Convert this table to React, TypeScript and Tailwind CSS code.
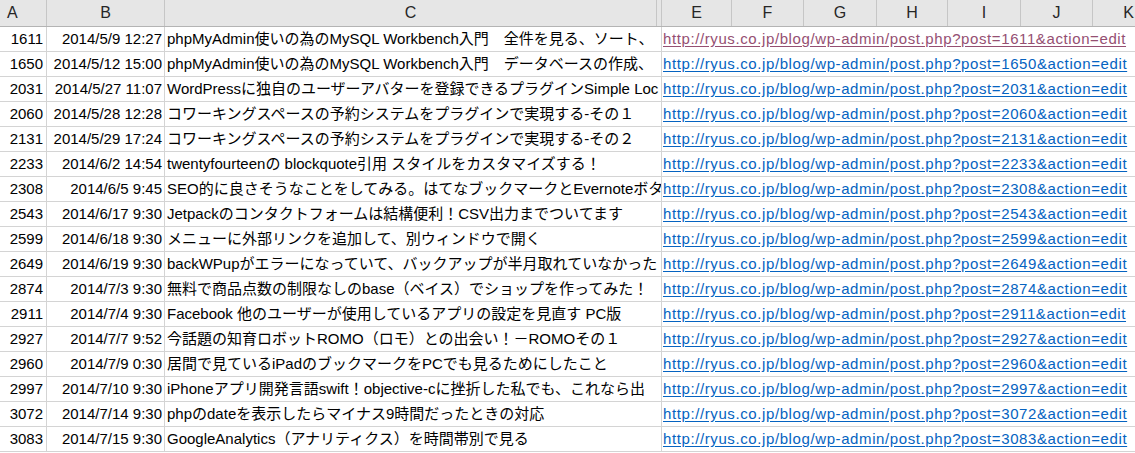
// Excel風の一覧: 投稿ID・日時・タイトル・編集リンク

type Row = { id: number; date: string; title: string };

const rows: Row[] = [
  { id: 1611, date: "2014/5/9 12:27", title: "phpMyAdmin使いの為のMySQL Workbench入門　全件を見る、ソート、" },
  { id: 1650, date: "2014/5/12 15:00", title: "phpMyAdmin使いの為のMySQL Workbench入門　データベースの作成、" },
  { id: 2031, date: "2014/5/27 11:07", title: "WordPressに独自のユーザーアバターを登録できるプラグインSimple Loc" },
  { id: 2060, date: "2014/5/28 12:28", title: "コワーキングスペースの予約システムをプラグインで実現する-その１" },
  { id: 2131, date: "2014/5/29 17:24", title: "コワーキングスペースの予約システムをプラグインで実現する-その２" },
  { id: 2233, date: "2014/6/2 14:54", title: "twentyfourteenの blockquote引用 スタイルをカスタマイズする！" },
  { id: 2308, date: "2014/6/5 9:45", title: "SEO的に良さそうなことをしてみる。はてなブックマークとEvernoteボタ" },
  { id: 2543, date: "2014/6/17 9:30", title: "Jetpackのコンタクトフォームは結構便利！CSV出力までついてます" },
  { id: 2599, date: "2014/6/18 9:30", title: "メニューに外部リンクを追加して、別ウィンドウで開く" },
  { id: 2649, date: "2014/6/19 9:30", title: "backWPupがエラーになっていて、バックアップが半月取れていなかった" },
  { id: 2874, date: "2014/7/3 9:30", title: "無料で商品点数の制限なしのbase（ベイス）でショップを作ってみた！" },
  { id: 2911, date: "2014/7/4 9:30", title: "Facebook 他のユーザーが使用しているアプリの設定を見直す PC版" },
  { id: 2927, date: "2014/7/7 9:52", title: "今話題の知育ロボットROMO（ロモ）との出会い！－ROMOその１" },
  { id: 2960, date: "2014/7/9 0:30", title: "居間で見ているiPadのブックマークをPCでも見るためにしたこと" },
  { id: 2997, date: "2014/7/10 9:30", title: "iPhoneアプリ開発言語swift！objective-cに挫折した私でも、これなら出" },
  { id: 3072, date: "2014/7/14 9:30", title: "phpのdateを表示したらマイナス9時間だったときの対応" },
  { id: 3083, date: "2014/7/15 9:30", title: "GoogleAnalytics（アナリティクス）を時間帯別で見る" },
];

// 列ヘッダー（D列は非表示なので細い隙間だけ）
const headers = [
  { label: "A", cls: "w-[47px] justify-start pl-[7px]" },
  { label: "B", cls: "w-[118px] justify-center" },
  { label: "C", cls: "w-[492px] justify-center" },
  { label: "", cls: "w-[5px]" },
  { label: "E", cls: "w-[70px] justify-center" },
  { label: "F", cls: "w-[72px] justify-center" },
  { label: "G", cls: "w-[73px] justify-center" },
  { label: "H", cls: "w-[71px] justify-center" },
  { label: "I", cls: "w-[73px] justify-center" },
  { label: "J", cls: "w-[72px] justify-center" },
  { label: "K", cls: "w-[72px] justify-center" },
];

export default function App() {
  return (
    <div className="h-[453px] w-[1135px] overflow-hidden bg-white font-['Liberation_Sans','Noto_Sans_CJK_JP',sans-serif] text-[15px] text-black">
      <div className="flex h-[27px] border-b border-[#b4b4b4] bg-[#e6e6e6]">
        {headers.map((h, i) => (
          <div
            key={i}
            className={`flex shrink-0 items-center border-r border-[#c6c6c6] text-[16px] text-[#262626] ${h.cls}`}
          >
            {h.label}
          </div>
        ))}
      </div>

      {rows.map((r, i) => (
        <div key={r.id} className="flex h-[25px] border-b border-[#d4d4d4]">
          <div className="flex w-[47px] shrink-0 items-center justify-end border-r border-[#d4d4d4] pr-[3px]">
            {r.id}
          </div>
          <div className="flex w-[118px] shrink-0 items-center justify-end border-r border-[#d4d4d4] pr-[2px]">
            {r.date}
          </div>
          <div className="flex w-[497px] shrink-0 items-center overflow-hidden whitespace-nowrap border-r border-[#d4d4d4] pl-[2px]">
            {r.title}
          </div>
          <div className="flex min-w-0 flex-1 items-center whitespace-nowrap pl-[1px]">
            <a
              href="#"
              className={`tracking-[0.6px] underline underline-offset-2 ${
                i === 0 ? "text-[#954f72]" : "text-[#0563c1]"
              }`}
            >
              {`http://ryus.co.jp/blog/wp-admin/post.php?post=${r.id}&action=edit`}
            </a>
          </div>
        </div>
      ))}
    </div>
  );
}
